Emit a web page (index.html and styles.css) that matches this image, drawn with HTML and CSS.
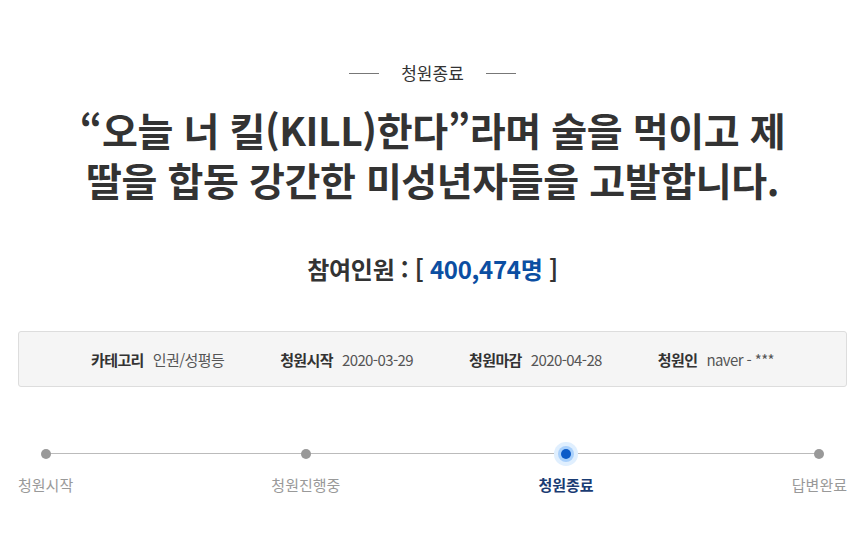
FILE: index.html
```html
<!DOCTYPE html>
<html lang="ko">
<head>
    <meta charset="UTF-8">
    <title>청원종료</title>
    <link rel="stylesheet" href="styles.css">
</head>
<body>
<div class="wrap">
    <div class="status"><span class="bar"></span><span>청원종료</span><span class="bar"></span></div>
    <h3 class="title">
        <span>“오늘 너 킬(KILL)한다”라며 술을 먹이고 제</span>
        <span>딸을 합동 강간한 미성년자들을 고발합니다.</span>
    </h3>
    <h2 class="count">참여인원 : [ <span class="num">400,474명</span> ]</h2>
    <ul class="info">
        <li><strong>카테고리</strong>인권/성평등</li>
        <li><strong>청원시작</strong>2020-03-29</li>
        <li><strong>청원마감</strong>2020-04-28</li>
        <li><strong>청원인</strong>naver - ***</li>
    </ul>
    <div class="progress">
        <div class="line"></div>
        <ol class="steps">
            <li><i></i>청원시작</li>
            <li><i></i>청원진행중</li>
            <li class="on"><i></i>청원종료</li>
            <li><i></i>답변완료</li>
        </ol>
    </div>
</div>
</body>
</html>
```

FILE: styles.css
```css
* {
    margin: 0;
    padding: 0
}
ul, ol {
    list-style: none
}
body {
    font-family: "Noto Sans CJK KR", "Noto Sans", sans-serif;
    color: #333;
    background: #fff;
}

.wrap {
    width: 829px;
    margin: 0 auto;
    padding-top: 58px;
}

.status {
    display: flex;
    justify-content: center;
    align-items: center;
    gap: 22px;
    font-size: 17px;
    line-height: 30px;
    color: #333;
}
.status .bar {
    width: 30px;
    height: 1px;
    background: #777;
}

.title {
    margin-top: 16px;
    display: flex;
    flex-direction: column;
    align-items: center;
    font-size: 39px;
    line-height: 50px;
    font-weight: bold;
    letter-spacing: -0.4px;
    color: #333;
}
.title span {
    display: block;
    height: 50px;
}

.count {
    margin-top: 49px;
    text-align: center;
    font-size: 24px;
    line-height: 32px;
    font-weight: bold;
    letter-spacing: -0.3px;
    color: #333;
}
.count .num {
    color: #0b4ea2;
}

.info {
    margin-top: 46px;
    height: 54px;
    display: flex;
    justify-content: center;
    align-items: center;
    gap: 56px;
    background: #f5f5f5;
    border: 1px solid #ddd;
    border-radius: 3px;
    font-size: 15px;
    color: #555;
    letter-spacing: -0.6px;
}
.info strong {
    color: #333;
    margin-right: 9px;
}

.progress {
    position: relative;
    margin-top: 59px;
}
.progress .line {
    position: absolute;
    left: 27px;
    right: 27px;
    top: 7px;
    height: 1px;
    background: #bbb;
}
.steps {
    display: flex;
    justify-content: space-between;
    font-size: 15px;
    color: #999;
}
.steps li {
    display: flex;
    flex-direction: column;
    align-items: center;
    gap: 15px;
}
.steps i {
    position: relative;
    width: 10px;
    height: 10px;
    margin-top: 3px;
    border-radius: 50%;
    background: #999;
}
.steps li.on {
    color: #1a3c73;
    font-weight: bold;
}
.steps li.on i {
    background: #0a5ac8;
    box-shadow: 0 0 0 3px #a9d0fb, 0 0 0 7px #e0effe;
}
```
